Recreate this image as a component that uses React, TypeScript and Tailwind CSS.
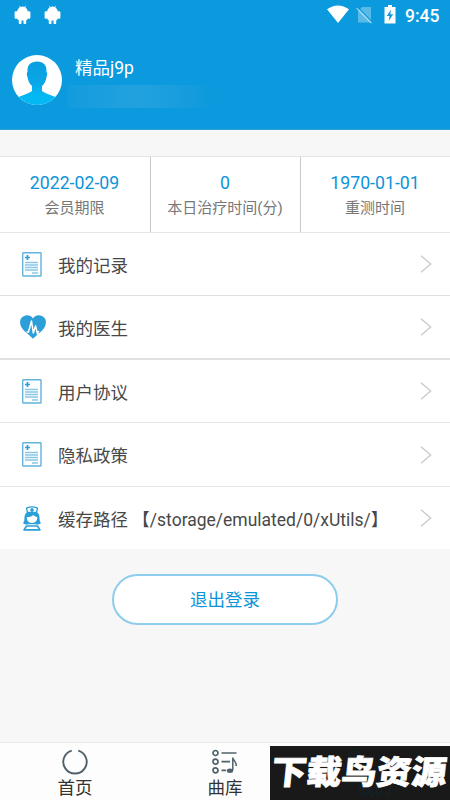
import type { ReactNode } from "react";

function AndroidIcon() {
  return (
    <svg className="h-[19px] w-[17px]" viewBox="0 0 17 19" fill="white" aria-hidden="true">
      <path d="M3 8C3 5 4.300 3.200 5.800 2.200L5.100 1l.5-.3.900 1.200a6 6 0 0 1 4 0l.9-1.200.5.3-.7 1.200C12.700 3.200 14 5 14 8z" />
      <path d="M3 6.500h11V12q0 3.500-3 3.500H6q-3 0-3-3.500z" />
      <rect x="0.600" y="6.200" width="3" height="7.500" rx="1.200" />
      <rect x="13.400" y="6.200" width="3" height="7.500" rx="1.200" />
      <rect x="4.800" y="13" width="2.700" height="6" rx="0.800" />
      <rect x="9.500" y="13" width="2.700" height="6" rx="0.800" />
    </svg>
  );
}

function StatusBar() {
  return (
    <div className="flex h-[30px] items-start pl-[14px] pr-[10px] text-white">
      <div className="mt-[5px] flex gap-[13px]">
        <AndroidIcon />
        <AndroidIcon />
      </div>
      <div className="ml-auto flex items-start">
        <svg className="mt-[5px] h-[19px] w-[22px]" viewBox="0 0 22 19" fill="white" aria-hidden="true">
          <path d="M0 4.3Q11-3.3 22 4.3L11 18z" />
        </svg>
        <svg className="ml-[7px] mt-[6px] h-[18px] w-[17px]" viewBox="0 0 17 18" aria-hidden="true">
          <path d="M2 5.2L6 1h9v15.5H2z" fill="white" opacity="0.32" />
          <path d="M1.800 1.300L16.500 16.500" stroke="#0b9add" strokeWidth="1.200" />
          <path d="M.5 2L15.500 17.2" stroke="white" strokeWidth="1.300" opacity="0.5" />
        </svg>
        <svg className="ml-[11px] mt-[5px] h-[19px] w-[12px]" viewBox="0 0 12 19" aria-hidden="true">
          <path d="M4 0h4v2h3.500v16.500H.5V2H4z" fill="white" />
          <path d="M7 4.500L2.800 11h2.700L4.700 16 9.200 9.200H6.300z" fill="#0b9add" />
        </svg>
        <span className="ml-[9px] mt-[4px] w-[35px] whitespace-nowrap text-[17.500px] font-medium leading-[24px]">9:45</span>
      </div>
    </div>
  );
}

function Avatar() {
  return (
    <svg className="h-[50px] w-[50px] rounded-full bg-white" viewBox="0 0 50 50" aria-hidden="true">
      <defs>
        <linearGradient id="person" x1="0" y1="0" x2="0" y2="1">
          <stop offset="0" stopColor="#0a9edf" />
          <stop offset="0.5" stopColor="#08a8e8" />
          <stop offset="0.8" stopColor="#03b8f3" />
        </linearGradient>
      </defs>
      <path
        d="M25 6.500c6.500 0 9.500 3.500 9.500 9v1.500c.9.300.8 3.500 0 5-.6 4-2 7-4.500 9v5c2.500 2 8.500 4 13.500 6v8h-37v-8c5-2 11-4 13.500-6v-5c-2.500-2-3.900-5-4.500-9-.8-1.500-.9-4.700 0-5v-1.500c0-5.500 3-9 9.500-9z"
        fill="url(#person)"
      />
    </svg>
  );
}

function RecordIcon() {
  return (
    <svg className="h-[25px] w-[20px]" viewBox="0 0 20 25" fill="none" aria-hidden="true">
      <rect x="0.700" y="0.700" width="18.300" height="23.300" rx="0.600" stroke="#62b3dd" strokeWidth="1.400" />
      <path d="M5.500 3v5M3 5.500h5" stroke="#2d9fd8" strokeWidth="1.700" />
      <path d="M3 10.500h13M3 13h13M3 15.500h13M3 18h13M10 21h6" stroke="#8bc8e8" strokeWidth="1.300" />
    </svg>
  );
}

function HeartIcon() {
  return (
    <svg className="h-[24px] w-[26px] translate-x-px" viewBox="0 0 26 24" aria-hidden="true">
      <path d="M13 3.500C10.500-.8 4.500-.6 1.600 2.800-1 6-.1 11 3 14.500c2.500 3 6.500 5.500 10 9.300 3.500-3.800 7.500-6.300 10-9.300 3.100-3.500 4-8.500 1.400-11.700C21.500-.6 15.500-.8 13 3.500z" fill="#2d9fd8" />
      <path d="M6.500 17h2L11.500 6l1.800 12 2.200-7 2 8 1.200-3" fill="none" stroke="white" strokeWidth="1.500" strokeLinejoin="round" />
    </svg>
  );
}

function NurseIcon() {
  return (
    <svg className="h-[25px] w-[20px]" viewBox="0 0 20 25" fill="none" aria-hidden="true">
      <path d="M5.500 6.500L4.500 2.200Q10-.4 15.500 2.200L14.500 6.500z" stroke="#2d9fd8" strokeWidth="1.300" />
      <path d="M10 2v4M8 4h4" stroke="#2d9fd8" strokeWidth="1.700" />
      <path d="M4.500 6.500h11c1.900 1.800 2 4 2.100 6.500.1 2 .6 3.200 1.400 4-1.500 1.500-4 2-5.500 1.200h-7C5 19 2.500 18.500 1 17c.8-.8 1.300-2 1.400-4 .1-2.500.2-4.700 2.100-6.500z" fill="#2d9fd8" />
      <path d="M5 11c2.800.2 4.700-.4 6.200-2 1 1.200 2.300 1.800 3.900 2 .8 3-1.800 6-5.100 6s-5.800-3-5-6z" fill="white" />
      <path d="M4.500 20h11l2.500 3.900H2z" stroke="#2d9fd8" strokeWidth="1.600" strokeLinejoin="round" />
    </svg>
  );
}

const stats = [
  { value: "2022-02-09", label: "会员期限" },
  { value: "0", label: "本日治疗时间(分)" },
  { value: "1970-01-01", label: "重测时间" },
];

const rows: { icon: ReactNode; label: string; height: string }[] = [
  { icon: <RecordIcon />, label: "我的记录", height: "h-[63px] border-b border-[#dfdfdf]" },
  { icon: <HeartIcon />, label: "我的医生", height: "h-[64px] border-b-2 border-[#e1e1e1]" },
  { icon: <RecordIcon />, label: "用户协议", height: "h-[63px] border-b border-[#e7e7e7]" },
  { icon: <RecordIcon />, label: "隐私政策", height: "h-[64px] border-b border-[#e3e3e3]" },
  { icon: <NurseIcon />, label: "缓存路径 【/storage/emulated/0/xUtils/】", height: "h-[62px]" },
];

function Chevron() {
  return (
    <svg className="h-[18px] w-[12px]" viewBox="0 0 12 18" fill="none" stroke="#c9c9c9" strokeWidth="1.300" aria-hidden="true">
      <path d="M1 .8L10.700 9 1 17.200" />
    </svg>
  );
}

function HomeIcon() {
  return (
    <svg className="h-[26px] w-[26px]" viewBox="0 0 26 26" fill="none" stroke="#4f626b" strokeWidth="1.900" aria-hidden="true">
      <path d="M9.700 1.600a11.700 11.700 0 1 0 6.600 0" />
    </svg>
  );
}

function SongsIcon() {
  return (
    <svg className="h-[26px] w-[26px]" viewBox="0 0 26 26" fill="none" stroke="#4f626b" strokeWidth="1.700" aria-hidden="true">
      <circle cx="3.500" cy="4" r="2.500" />
      <circle cx="3.500" cy="12.700" r="2.500" />
      <circle cx="3.500" cy="21.300" r="2.500" />
      <path d="M9.500 4h15M9.500 12.700h8.500M9.500 21.300H14" />
      <path d="M20.800 21V8.500c.3 3 3.700 4 3.500 8.500" strokeWidth="1.500" />
      <ellipse cx="18" cy="21.800" rx="3.200" ry="2.200" fill="#4f626b" stroke="none" />
    </svg>
  );
}

function Watermark() {
  return (
    <div className="absolute bottom-0 right-0 h-[54px] w-[180px] bg-[#191919]">
      <svg className="h-[54px] w-[180px]" viewBox="0 0 180 54" aria-hidden="true">
        <circle cx="85" cy="10" r="5" fill="none" stroke="#112228" strokeWidth="1.500" />
        <text x="105" y="48" textAnchor="middle" fontSize="17.500" fill="#112228">我的</text>
        <text
          x="4"
          y="38"
          transform="translate(0.500 0) skewX(-6)"
          fontSize="33"
          fontWeight="900"
          textLength="175"
          lengthAdjust="spacingAndGlyphs"
          fill="white"
          stroke="white"
          strokeWidth="0.800"
        >
          下载鸟资源
        </text>
      </svg>
    </div>
  );
}

export default function App() {
  return (
    <div className="relative flex h-[800px] w-[450px] flex-col overflow-hidden bg-[#f7f7f7] font-[Roboto,'Noto_Sans_CJK_SC',sans-serif]">
      <header className="h-[130px] shrink-0 border-b border-[#2f9fd4] bg-[#0b9add]">
        <StatusBar />
        <div className="flex items-start pl-[12px] pt-[25px]">
          <Avatar />
          <div className="ml-[5px] flex flex-col">
            <span className="ml-[8px] text-[17.500px] leading-[26px] text-white">精品j9p</span>
            <span className="mt-[4px] h-[23px] w-[144px] bg-gradient-to-r from-[#129cde] via-[#23a1df] to-[#0b9add]" />
          </div>
        </div>
      </header>

      <section className="mt-[26px] grid h-[77px] shrink-0 grid-cols-[151px_150px_149px] divide-x divide-[#c9c9c9] border-y border-[#e5e5e5] bg-white">
        {stats.map((s) => (
          <div key={s.label} className="flex flex-col items-center pr-px pt-[14px]">
            <span className="text-[17.700px] leading-[25px] text-[#0b94da]">{s.value}</span>
            <span className="text-[15px] leading-[24px] text-[#777]">{s.label}</span>
          </div>
        ))}
      </section>

      <ul className="shrink-0 bg-white">
        {rows.map((r) => (
          <li key={r.label} className={`flex items-center pr-[18px] ${r.height}`}>
            <span className="ml-[19px] flex w-[26px] shrink-0 justify-center">{r.icon}</span>
            <span className="ml-[13px] mt-[4px] whitespace-nowrap text-[17.500px] text-[#484848]">{r.label}</span>
            <span className="ml-auto">
              <Chevron />
            </span>
          </li>
        ))}
      </ul>

      <button className="mx-auto mt-[25px] h-[51px] w-[226px] shrink-0 rounded-full border-2 border-[#8dcced] bg-white pt-[2px] text-[17.500px] text-[#0b94da]">
        退出登录
      </button>

      <nav className="mt-auto grid h-[58px] shrink-0 grid-cols-3 border-t border-[#e9e9e9] bg-[#fdfdfd] text-[17.500px] leading-[27px] text-[#333]">
        <div className="flex flex-col items-center pt-[6px]">
          <HomeIcon />
          首页
        </div>
        <div className="flex flex-col items-center pt-[6px]">
          <SongsIcon />
          曲库
        </div>
      </nav>
      <Watermark />
    </div>
  );
}
